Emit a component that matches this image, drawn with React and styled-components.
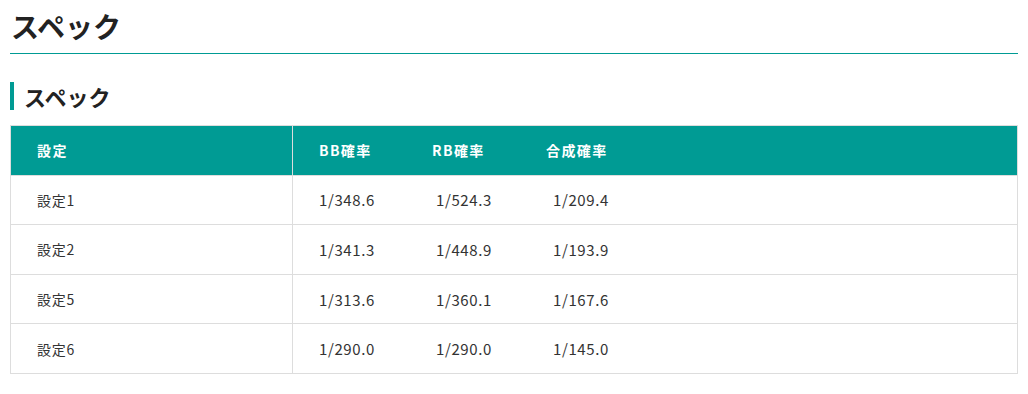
import React from 'react';
import styled, { createGlobalStyle } from 'styled-components';

const GlobalStyle = createGlobalStyle`
  body {
    margin: 0;
    background: #fff;
    font-family: "Noto Sans CJK JP", "Noto Sans", sans-serif;
    color: #333;
  }
`;

const TEAL = '#009b94';

const Page = styled.div`
  padding: 6px 10px 0;
`;

const Title = styled.h1`
  margin: 0;
  padding: 0 0 7px 1px;
  font-size: 28px;
  line-height: 40px;
  font-weight: 700;
  color: #222;
  border-bottom: 1px solid ${TEAL};
`;

const Subtitle = styled.h2`
  margin: 28px 0 0;
  padding-left: 10px;
  border-left: 4px solid ${TEAL};
  font-size: 22px;
  line-height: 28px;
  font-weight: 700;
  color: #222;
`;

const Table = styled.table`
  margin-top: 15px;
  width: 100%;
  border-collapse: collapse;
  font-size: 14px;
`;

const Row = styled.tr`
  height: 49.6px;
`;

const Cell = styled.td`
  border: 1px solid #ddd;
  padding: 0 0 0 26px;
  vertical-align: middle;
  width: ${p => (p.$first ? '255px' : 'auto')};
  background: ${p => (p.$head ? TEAL : '#fff')};
  color: ${p => (p.$head ? '#fff' : '#333')};
  font-weight: ${p => (p.$head ? 700 : 400)};
  font-size: ${p => (p.$head || p.$first ? '14px' : '15px')};
  letter-spacing: ${p => (p.$head ? '0.1em' : p.$first ? '0.05em' : '0.04em')};
`;

const Value = styled.span`
  display: inline-block;
  width: ${p => p.$w}px;
`;

const rows = [
  ['設定1', '1/348.6', '1/524.3', '1/209.4'],
  ['設定2', '1/341.3', '1/448.9', '1/193.9'],
  ['設定5', '1/313.6', '1/360.1', '1/167.6'],
  ['設定6', '1/290.0', '1/290.0', '1/145.0'],
];

export default function App() {
  return (
    <Page>
      <GlobalStyle />
      <Title>スペック</Title>
      <Subtitle>スペック</Subtitle>
      <Table>
        <tbody>
          <Row>
            <Cell $head $first>設定</Cell>
            <Cell $head>
              <Value $w={113}>BB確率</Value>
              <Value $w={114}>RB確率</Value>
              <Value $w={100}>合成確率</Value>
            </Cell>
          </Row>
          {rows.map(r => (
            <Row key={r[0]}>
              <Cell $first>{r[0]}</Cell>
              <Cell>
                <Value $w={117}>{r[1]}</Value>
                <Value $w={117}>{r[2]}</Value>
                <Value $w={100}>{r[3]}</Value>
              </Cell>
            </Row>
          ))}
        </tbody>
      </Table>
    </Page>
  );
}
